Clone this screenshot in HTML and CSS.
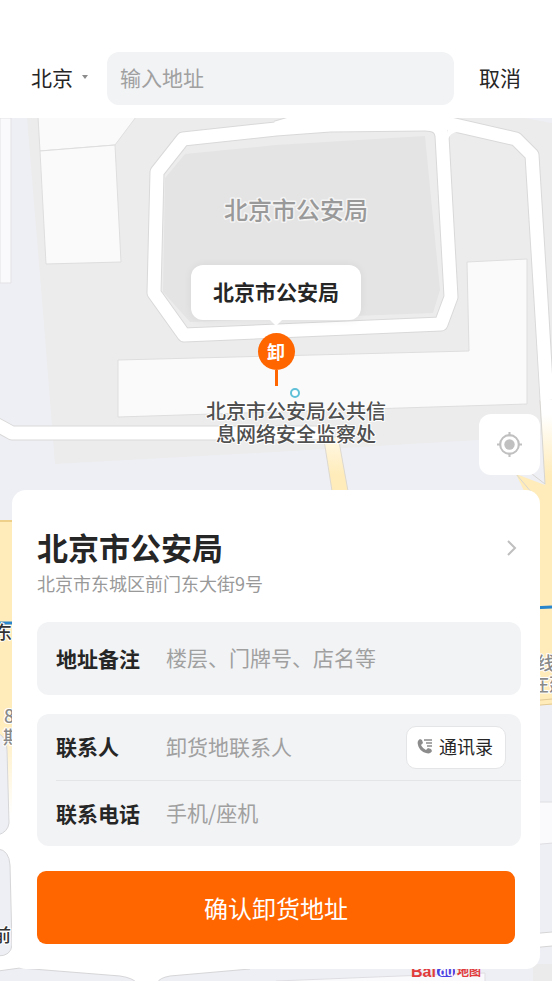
FILE: index.html
```html
<!DOCTYPE html>
<html lang="zh-CN">
<head>
    <meta charset="UTF-8">
    <meta name="viewport" content="width=device-width, initial-scale=1.0">
    <title>选择卸货地址</title>
    <link rel="stylesheet" href="styles.css">
</head>
<body>
    <header class="search-bar">
        <button type="button" class="city">
            北京
            <svg class="city-arrow" viewBox="0 0 6 4" aria-hidden="true"><path d="M0 0h6L3 4z"/></svg>
        </button>
        <input class="search-input" type="search" placeholder="输入地址" aria-label="输入地址">
        <button type="button" class="cancel">取消</button>
    </header>

    <main class="map">
        <svg class="map-canvas" viewBox="0 118 552 863" preserveAspectRatio="xMidYMin slice" aria-hidden="true">
            <defs>
                <linearGradient id="fadeDown" gradientUnits="userSpaceOnUse" x1="0" y1="415" x2="0" y2="475">
                    <stop offset="0" stop-color="#fff"/>
                    <stop offset="1" stop-color="#ffecba"/>
                </linearGradient>
                <linearGradient id="fadeUp" gradientUnits="userSpaceOnUse" x1="0" y1="720" x2="0" y2="815">
                    <stop offset="0" stop-color="#ffecba"/>
                    <stop offset="1" stop-color="#fff"/>
                </linearGradient>
            </defs>
            <rect y="118" width="552" height="863" fill="#eeeff5"/>

            <!-- blocks and buildings -->
            <path d="M0 118h11v165H0z" fill="#fafafc" stroke="#e2e2e6"/>
            <path d="M27 118H525L552 123V434L478 440L276 452L55 464L42 300z" fill="#ececec"/>
            <g fill="#fafafa" stroke="#dedede">
                <path d="M38 117H136L115 145L40 151z"/>
                <path d="M40 151L115 145L121 262L46 264z"/>
                <path d="M118 360L469 351L467 262L527 259V404L118 417z"/>
            </g>
            <path d="M185 154L276 145L425 136L440 290L433 313L190 322L163 292L165 178z" fill="#e4e4e4"/>

            <!-- roads: casing first, then the surface -->
            <g fill="none" stroke="#d9d9d9" stroke-width="15" stroke-linejoin="round">
                <path d="M-10 421L12 433H331"/>
                <path d="M183 139L157 172L154 293L184 335L441 324L451 297L442 136Q441 124 425 124L330 125L276 129z"/>
                <path d="M276 128L300 121L330 119L446 123L516 139L532 155L541 300L549 430"/>
            </g>
            <path d="M324 440L332 491H348L338 436z" fill="url(#fadeDown)" stroke="#ddd9d0"/>
            <path d="M516 474L545 485L540 400H553V622H538V520z" fill="url(#fadeDown)"/>
            <path d="M516 474L538 500M540 400L545 484L532 474" fill="none" stroke="#d8d6d2"/>
            <g fill="none" stroke="#fff" stroke-width="13" stroke-linejoin="round">
                <path d="M-10 421L12 433H331"/>
                <path d="M183 139L157 172L154 293L184 335L441 324L451 297L442 136Q441 124 425 124L330 125L276 129z"/>
                <path d="M276 128L300 121L330 119L446 123L516 139L532 155L541 300L547 400"/>
            </g>
            <path d="M447 144Q448 132 459 132L448 124z" fill="#fff"/>

            <!-- left edge -->
            <path d="M0 521H30V981H0z" fill="url(#fadeUp)"/>
            <path d="M0 521H30" stroke="#efd08a" stroke-width="2"/>
            <path d="M0 623H30" stroke="#2a86cc" stroke-width="3"/>
            <g fill="#eeeff5" stroke="#d6d6d8">
                <path d="M-2 733Q7 738 7 750L9 823Q8 832 -2 835z"/>
                <path d="M-2 849Q9 850 10 865L12 945Q11 956 -2 956z"/>
            </g>

            <!-- right edge -->
            <path d="M530 560H552V705H530z" fill="#ffecba"/>
            <path d="M530 701L552 699M530 706L552 704" stroke="#e2c894"/>
            <path d="M530 608L552 607" stroke="#2a86cc" stroke-width="3"/>
            <path d="M530 802H553V843L530 845z" fill="#fafafc" stroke="#dedee2"/>
            <path d="M530 941L553 939" stroke="#d5d5d5" stroke-width="15"/>
            <path d="M530 941L553 939" stroke="#fff" stroke-width="13"/>

            <!-- bottom edge -->
            <path d="M0 960H300V981H0z" fill="#fff"/>
            <path d="M-2 971L20 968L120 976Q133 978 137 983H-2zM157 983Q159 978 170 976L250 969L300 966V983z" fill="#eeeff5" stroke="#d6d6d8"/>
            <path d="M250 969H340V982H251z" fill="#eeeff5"/>
            <path d="M533 964H552V981H533z" fill="#ebebeb"/>
            <path d="M276 981L400 976L485 973V983H276z" fill="#fafafc" stroke="#dedee2"/>

            <g class="area-label">
                <text x="296" y="219">北京市公安局</text>
            </g>
            <circle cx="295" cy="393" r="4" fill="#fff" stroke="#5fc0d8" stroke-width="2"/>
            <g class="poi-label">
                <text x="296" y="419">北京市公安局公共信</text>
                <text x="296" y="442">息网络安全监察处</text>
            </g>
            <g class="edge-label">
                <text class="dark" x="-6" y="639">东</text>
                <text x="4" y="723">8</text>
                <text x="3" y="744">期</text>
                <text class="dark" x="-7" y="942">前</text>
                <text x="537" y="670">线</text>
                <text x="531" y="691">在建</text>
            </g>
            <g class="map-logo">
                <text x="411" y="977" fill="#e23b3b">Bai</text>
                <rect x="437" y="966" width="18" height="11" rx="5" fill="#4a3fe0"/>
                <text class="logo-du" x="439" y="976" fill="#fff">du</text>
                <text class="logo-map" x="457" y="976" fill="#e23b3b">地图</text>
            </g>
        </svg>

        <div class="marker">
            <div class="callout">北京市公安局</div>
            <div class="pin">卸</div>
        </div>

        <button type="button" class="locate" aria-label="定位">
            <svg viewBox="0 0 24 24" aria-hidden="true">
                <circle cx="12" cy="12" r="9" fill="none" stroke="#c0c0c0" stroke-width="2"/>
                <circle cx="12" cy="12" r="5" fill="#c0c0c0"/>
                <path d="M12 0v4M12 20v4M0 12h4M20 12h4" stroke="#c0c0c0" stroke-width="2"/>
            </svg>
        </button>

        <form class="card">
            <a class="place" href="#">
                <span class="place-text">
                    <strong class="place-name">北京市公安局</strong>
                    <span class="place-address">北京市东城区前门东大街9号</span>
                </span>
                <svg class="chevron" viewBox="0 0 10 16" aria-hidden="true"><path d="M1 1l7 7-7 7"/></svg>
            </a>

            <div class="group">
                <div class="field">
                    <label for="note">地址备注</label>
                    <input id="note" type="text" placeholder="楼层、门牌号、店名等">
                </div>
            </div>

            <div class="group">
                <div class="field">
                    <label for="contact">联系人</label>
                    <input id="contact" type="text" placeholder="卸货地联系人">
                    <button type="button" class="contacts">
                        <svg viewBox="0 0 16 16" aria-hidden="true">
                            <path d="M3 1C1 2 0 4 1 7c1 4 4 7 8 8 3 1 5 0 6-2l-1-2-3-1-2 2C7 11 5 9 4 7l2-2-1-3z" fill="#8c8c8c"/>
                            <path d="M7 2h8M9 5h6M10 8h5" fill="none" stroke="#8c8c8c" stroke-width="1.5"/>
                        </svg>
                        通讯录
                    </button>
                </div>
                <div class="field">
                    <label for="phone">联系电话</label>
                    <input id="phone" type="tel" placeholder="手机/座机">
                </div>
            </div>

            <button type="submit" class="confirm">确认卸货地址</button>
        </form>
    </main>
</body>
</html>
```

FILE: styles.css
```css
* {
    box-sizing: border-box;
}

body {
    margin: 0;
    min-height: 100vh;
    display: flex;
    flex-direction: column;
    font-family: "Noto Sans CJK SC", sans-serif;
    font-size: 21px;
    color: #262626;
    background-color: #fff;
}

button,
input {
    font: inherit;
    color: inherit;
    border: 0;
    padding: 0;
    background: none;
}

input {
    min-width: 0;
    outline: none;
}

input::placeholder {
    color: #a0a0a0;
    opacity: 1;
}

/* Search bar */
.search-bar {
    display: flex;
    align-items: center;
    padding: 52px 31px 13px;
}

.city {
    display: flex;
    align-items: center;
    gap: 9px;
    padding-bottom: 3px;
    margin-right: 19px;
}

.city-arrow {
    width: 6px;
    height: 4px;
    fill: #8c8c8c;
}

.search-input {
    flex: 1;
    height: 53px;
    padding: 0 13px 3px;
    border-radius: 12px;
    background-color: #f2f3f5;
}

.cancel {
    padding-bottom: 3px;
    margin-left: 25px;
}

/* Map */
.map {
    position: relative;
    flex: 1;
    display: flex;
    flex-direction: column;
    justify-content: flex-end;
    padding: 296px 12px 12px;
    overflow: hidden;
}

.map-canvas {
    position: absolute;
    inset: 0;
    width: 100%;
    height: 100%;
}

.map-canvas text {
    paint-order: stroke;
    stroke-linejoin: round;
}

.area-label {
    font-size: 24px;
    font-weight: 500;
    text-anchor: middle;
    fill: #999;
    stroke: #f4f4f4;
    stroke-width: 3px;
}

.poi-label {
    font-size: 20px;
    font-weight: 500;
    text-anchor: middle;
    fill: #505050;
    stroke: #fff;
    stroke-width: 2px;
}

.edge-label {
    font-size: 18px;
    font-weight: 500;
    fill: #8a8a8a;
    stroke: #fff;
    stroke-width: 2px;
}

.edge-label .dark {
    fill: #333;
}

.map-logo {
    font-family: "Liberation Sans", "Noto Sans CJK SC", sans-serif;
    font-size: 16px;
    font-weight: bold;
}

.logo-du,
.logo-map {
    font-size: 12px;
}

.marker {
    position: absolute;
    top: 147px;
    left: 50%;
    transform: translateX(-50%);
    display: flex;
    flex-direction: column;
    align-items: center;
    gap: 13px;
}

.callout {
    position: relative;
    padding: 0 22px 2px;
    line-height: 53px;
    font-weight: bold;
    white-space: nowrap;
    border-radius: 12px;
    background-color: #fff;
    box-shadow: 0 0 8px rgba(0, 0, 0, 0.06);
}

.callout::after {
    content: "";
    position: absolute;
    top: 100%;
    left: 50%;
    margin-left: -6px;
    border: 6px solid transparent;
    border-top-color: #fff;
    border-bottom: 0;
}

.pin {
    position: relative;
    width: 37px;
    height: 37px;
    line-height: 36px;
    font-size: 18px;
    font-weight: bold;
    text-align: center;
    color: #fff;
    border-radius: 50%;
    background-color: #ff6600;
}

.pin::after {
    content: "";
    position: absolute;
    top: 100%;
    left: 17px;
    width: 3px;
    height: 16px;
    background-color: #ff6600;
}

.locate {
    position: relative;
    align-self: flex-end;
    display: flex;
    align-items: center;
    justify-content: center;
    width: 61px;
    height: 61px;
    margin-bottom: 15px;
    border-radius: 12px;
    background-color: #fff;
}

.locate svg {
    width: 25px;
    height: 25px;
}

/* Address card */
.card {
    position: relative;
    display: flex;
    flex-direction: column;
    padding: 36px 19px 25px 25px;
    border-radius: 14px;
    background-color: #fff;
}

.place {
    display: flex;
    justify-content: space-between;
    margin-bottom: 24px;
    color: inherit;
    text-decoration: none;
}

.place-text {
    display: flex;
    flex-direction: column;
}

.place-name {
    font-size: 31px;
    line-height: 42px;
}

.place-address {
    font-size: 18px;
    line-height: 30px;
    color: #999;
}

.chevron {
    width: 10px;
    height: 16px;
    margin: 14px 4px 0 0;
    fill: none;
    stroke: #bfbfbf;
    stroke-width: 2;
}

.group {
    padding-left: 19px;
    border-radius: 12px;
    background-color: #f2f3f5;
}

.group + .group {
    margin-top: 19px;
}

.field {
    display: flex;
    align-items: center;
    height: 73px;
    padding-right: 15px;
}

.field label {
    width: 110px;
    padding-bottom: 2px;
    font-weight: bold;
}

.field input {
    flex: 1;
    padding-bottom: 3px;
}

.group + .group .field {
    height: 66px;
}

.field + .field {
    border-top: 1px solid #e4e5e7;
}

.contacts {
    display: flex;
    align-items: center;
    gap: 6px;
    height: 43px;
    padding: 0 12px 2px 10px;
    font-size: 18px;
    border: 1px solid #e4e5e7;
    border-radius: 10px;
    background-color: #fff;
}

.contacts svg {
    width: 16px;
    height: 16px;
}

.confirm {
    height: 73px;
    margin: 25px 6px 0 0;
    font-size: 24px;
    color: #fff;
    border-radius: 9px;
    background-color: #ff6600;
}
```
